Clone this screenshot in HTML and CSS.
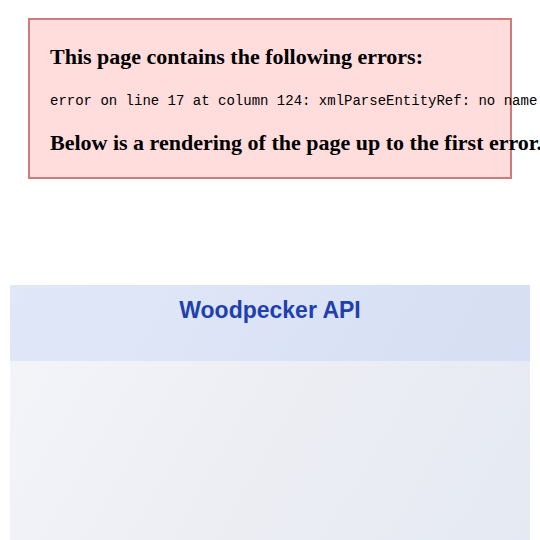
FILE: index.html
```html
<!DOCTYPE html>
<html>
<head>
<meta charset="utf-8">
<link rel="stylesheet" href="styles.css">
</head>
<body>
<div class="err">
<h3 class="err-title err-first">This page contains the following errors:</h3>
<div class="err-msg">error on line 17 at column 124: xmlParseEntityRef: no name</div>
<h3 class="err-title err-last">Below is a rendering of the page up to the first error.</h3>
</div>
<div class="card">
<div class="card-head"><h1 class="card-title">Woodpecker API</h1></div>
<div class="card-body"></div>
</div>
</body>
</html>
```
FILE: styles.css
```css
html, body {
  margin: 0;
  padding: 0;
  background: #ffffff;
}
body {
  font-family: "Liberation Serif", "Times New Roman", serif;
  color: #000;
}
.err {
  display: block;
  margin: 18px 28px 0;
  border: 2px solid #d07b7b;
  background: #ffdddd;
  padding: 0 20px;
  height: 157px;
  box-sizing: content-box;
  overflow: visible;
}
.err-title {
  font-size: 22px;
  font-weight: bold;
  line-height: 25px;
  margin: 0;
  white-space: nowrap;
}
.err-first {
  margin-top: 24px;
  margin-bottom: 24px;
}
.err-last {
  margin-top: 20px;
}
.err-msg {
  font-family: "Liberation Mono", "Courier New", monospace;
  font-size: 14px;
  line-height: 17px;
  white-space: nowrap;
}
.card {
  margin: 106px 10px 0;
}
.card-head {
  height: 76px;
  box-sizing: border-box;
  padding-top: 12px;
  background: linear-gradient(120deg, #e0e8f8 0%, #d6dff3 100%);
}
.card-title {
  margin: 0;
  text-align: center;
  font-family: "Liberation Sans", Arial, sans-serif;
  font-weight: bold;
  font-size: 23px;
  line-height: 27px;
  color: #1f40ae;
}
.card-body {
  height: 200px;
  background: linear-gradient(120deg, #f2f4f8 0%, #ebedf3 55%, #e5e9f3 100%);
}
```
